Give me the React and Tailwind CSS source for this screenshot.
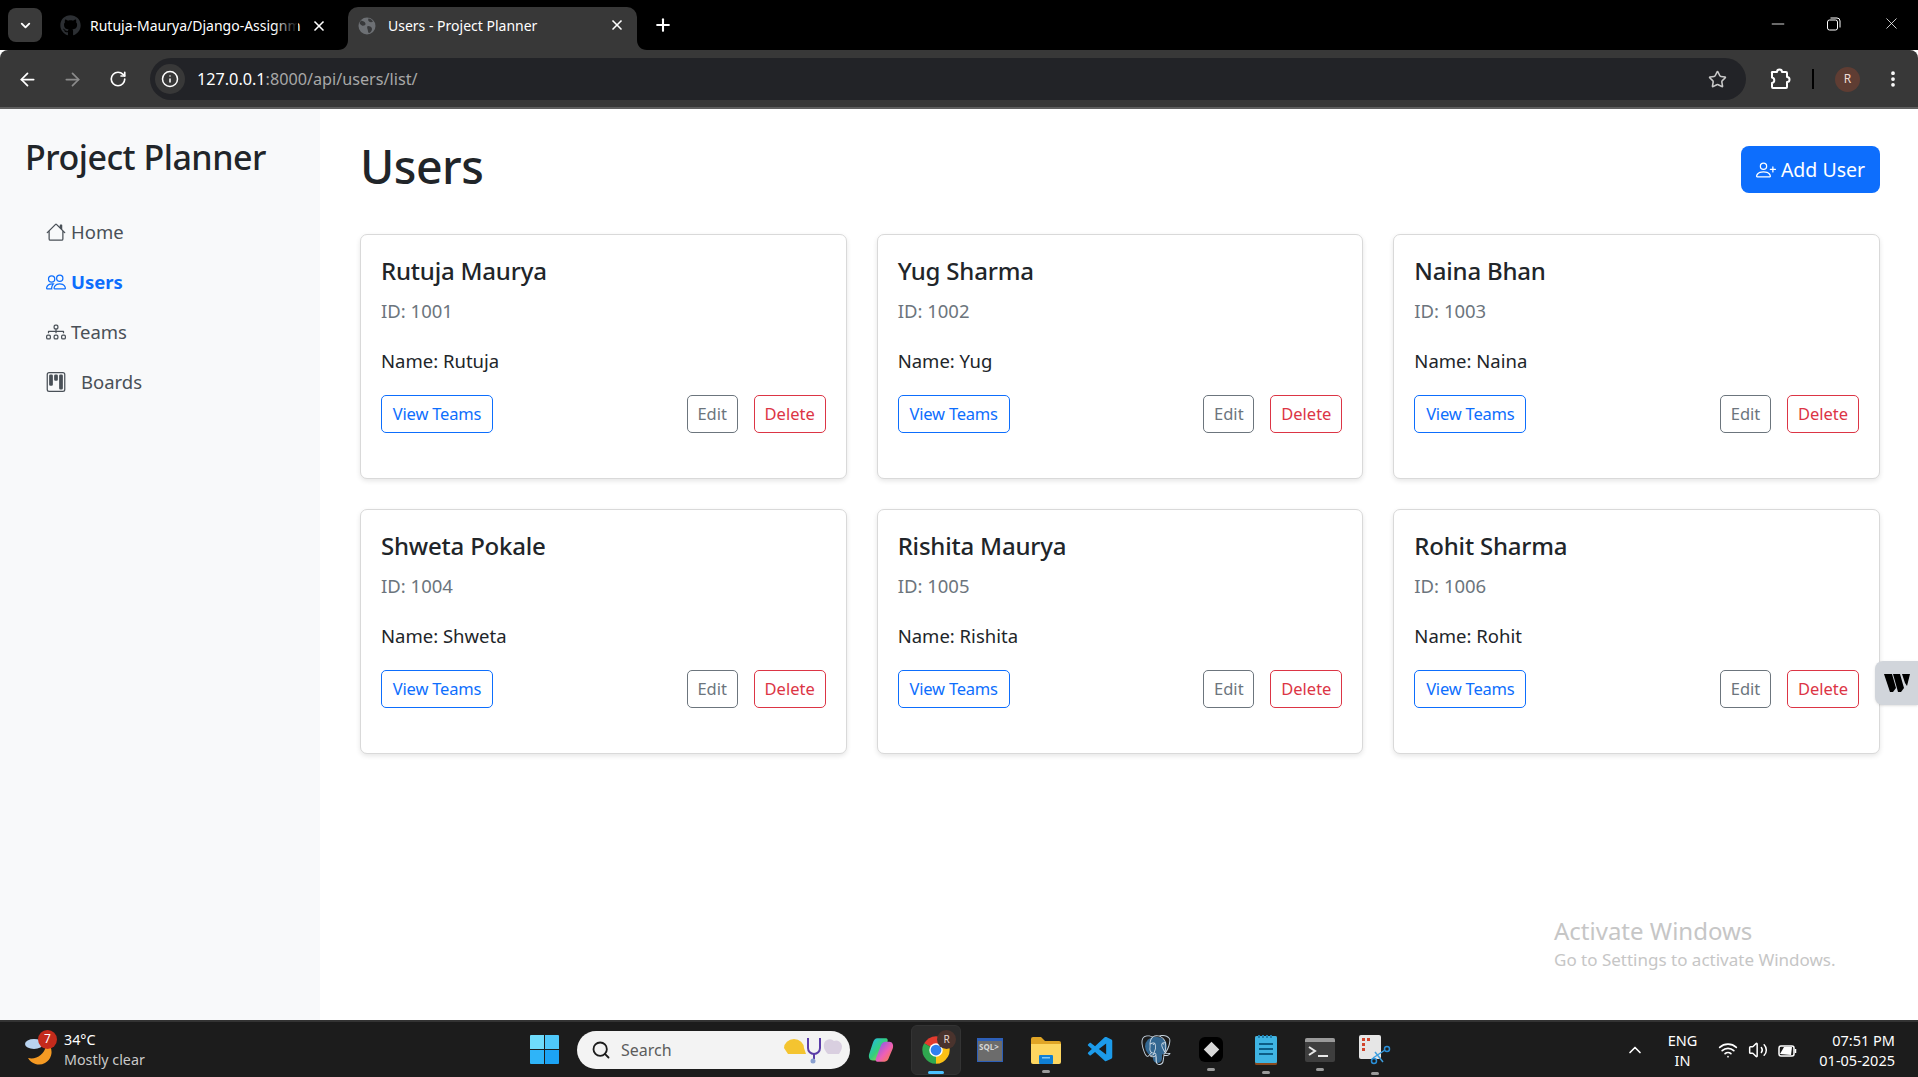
import { ArrowLeft, ArrowRight, RotateCw, Info, Star, EllipsisVertical, X, Plus, ChevronDown, ChevronUp, Minus, Search, Wifi, Volume2 } from 'lucide-react';
import { BsHouse, BsPeople, BsDiagram3, BsKanban, BsPersonPlus } from 'react-icons/bs';
import { FaGithub } from 'react-icons/fa';
import { SiPostgresql } from 'react-icons/si';
import { VscVscode } from 'react-icons/vsc';

const USERS = [
  { id: 1001, name: 'Rutuja Maurya', first: 'Rutuja' },
  { id: 1002, name: 'Yug Sharma', first: 'Yug' },
  { id: 1003, name: 'Naina Bhan', first: 'Naina' },
  { id: 1004, name: 'Shweta Pokale', first: 'Shweta' },
  { id: 1005, name: 'Rishita Maurya', first: 'Rishita' },
  { id: 1006, name: 'Rohit Sharma', first: 'Rohit' },
];

const ChromeLogo = () => (
  <svg width="30" height="30" viewBox="0 0 24 24">
    <path d="M12 12 L2.500 6.500 A11 11 0 0 1 21.500 6.500 Z" fill="#e33b2e" />
    <path d="M12 12 L21.500 6.500 A11 11 0 0 1 12 23 Z" fill="#fbc116" />
    <path d="M12 12 L12 23 A11 11 0 0 1 2.500 6.500 Z" fill="#2fa84f" />
    <circle cx="12" cy="12" r="5.400" fill="#fff" />
    <circle cx="12" cy="12" r="4.300" fill="#2f7fee" />
  </svg>
);

const Copilot = () => (
  <svg width="28" height="28" viewBox="0 0 24 24">
    <defs>
      <linearGradient id="cpa" x1="0" y1="0" x2="1" y2="1">
        <stop offset="0" stopColor="#1fb6f5" />
        <stop offset="0.5" stopColor="#35d07a" />
        <stop offset="1" stopColor="#f7c92e" />
      </linearGradient>
      <linearGradient id="cpb" x1="0" y1="0" x2="1" y2="1">
        <stop offset="0" stopColor="#6a5cf5" />
        <stop offset="0.55" stopColor="#ee5fb5" />
        <stop offset="1" stopColor="#f98a2c" />
      </linearGradient>
    </defs>
    <path d="M9 2h7c2 0 2 2 1.400 3.500L13 17c-1 2.500-3 4-5 4H5c-3 0-4-3-3-6l3-9c.8-2.500 2-4 4-4z" fill="url(#cpa)" />
    <path d="M15 22H9c-1.500 0-1.800-1.500-1.300-3L12 8c.8-2 2-3 4-3h3c3 0 4 3 3 6l-3 7c-.8 2.500-2 4-4 4z" fill="url(#cpb)" />
  </svg>
);

const Folder = () => (
  <svg width="30" height="28" viewBox="0 0 30 28">
    <path d="M0 3a2 2 0 0 1 2-2h8l4 4h14a2 2 0 0 1 2 2v4H0z" fill="#e0a526" />
    <path d="M0 8h30v18a2 2 0 0 1-2 2H2a2 2 0 0 1-2-2z" fill="#fdd660" />
    <rect x="8" y="19" width="14" height="9" rx="1" fill="#0f7fd4" />
    <rect x="11" y="21" width="8" height="1.500" fill="#7fc8f5" />
  </svg>
);

const SqlIcon = () => (
  <div className="w-[26px] h-6 bg-[#6c6c6c] border border-[#2d5fb8] border-t-[3px] flex items-start pl-[1px]">
    <span className="text-[8px] leading-[12px] font-bold text-[#d6d6d6]">SQL&gt;</span>
  </div>
);

const Notepad = () => (
  <svg width="22" height="30" viewBox="0 0 22 30">
    <rect x="0" y="1" width="22" height="29" rx="1.500" fill="#8a4a1f" />
    <rect x="0" y="1" width="22" height="27" rx="1.500" fill="#3fb4e3" />
    <rect x="4" y="8" width="14" height="2" fill="#0d5d86" />
    <rect x="4" y="13" width="14" height="2" fill="#0d5d86" />
    <rect x="4" y="18" width="14" height="2" fill="#0d5d86" />
    <path d="M3 0h2v3H3zM7 0h2v3H7zM11 0h2v3h-2zM15 0h2v3h-2z" fill="#1f7fae" />
  </svg>
);

const TerminalIcon = () => (
  <svg width="30" height="24" viewBox="0 0 30 24">
    <rect width="30" height="24" rx="2" fill="#3e3e3e" />
    <path d="M0 2a2 2 0 0 1 2-2h26a2 2 0 0 1 2 2v2H0z" fill="#9a9a9a" />
    <path d="M4 9l6 4-6 4" stroke="#e8e8e8" strokeWidth="2" fill="none" />
    <rect x="13" y="17" width="10" height="2" fill="#e8e8e8" />
  </svg>
);

const SnipIcon = () => (
  <svg width="32" height="32" viewBox="0 0 32 32">
    <rect x="0" y="1" width="22" height="24" rx="2" fill="#e6e6e6" />
    <rect x="3" y="4" width="3" height="3" fill="#d2452c" />
    <rect x="8" y="4" width="3" height="3" fill="#d2452c" />
    <rect x="3" y="9" width="3" height="3" fill="#d2452c" />
    <rect x="3" y="14" width="3" height="3" fill="#d2452c" />
    <path d="M14 24l12-8M16 18l8 10" stroke="#3d9fe0" strokeWidth="1.500" fill="none" />
    <circle cx="28" cy="15" r="2.500" stroke="#2a8fd8" strokeWidth="1.500" fill="none" />
    <circle cx="15" cy="27" r="2.500" stroke="#2a8fd8" strokeWidth="1.500" fill="none" />
  </svg>
);

const GlobeIcon = () => (
  <svg width="18" height="18" viewBox="0 0 18 18">
    <circle cx="9" cy="9" r="8.500" fill="#6d7074" />
    <path d="M3 3.500c2 .5 4 1 4.500 3S5 9 4 8.500 2 7 1.500 6zM10 9c2 0 4 1 4 3s-2 4-3 4-1-3-1.500-4S9 9 10 9zM10.500 1.500c2 0 3.500 1.500 4.500 3-1 1-3 1-4 0s-1-2-.5-3z" fill="#38393b" />
  </svg>
);

const ExtensionIcon = () => (
  <svg width="24" height="24" viewBox="0 0 24 24" fill="none" stroke="#fff" strokeWidth="2" strokeLinejoin="round" className="ml-[22px]">
    <path d="M4 5h5a2.500 2.500 0 0 1 5 0h4a1 1 0 0 1 1 1v4a2.500 2.500 0 0 1 0 5v5a1 1 0 0 1-1 1H5a1 1 0 0 1-1-1v-4a2.800 2.800 0 0 0 0-5.500V6a1 1 0 0 1 0-1z" />
  </svg>
);

const TabCorner = ({ flip }) => (
  <svg width="10" height="10" viewBox="0 0 10 10" className={flip ? 'absolute bottom-0 -right-[10px] -scale-x-100' : 'absolute bottom-0 -left-[10px]'}>
    <path d="M10 0v10H0c6 0 10-4 10-10z" fill="#383838" />
  </svg>
);

const TabStrip = () => (
  <div className="h-[50px] bg-black flex items-end shrink-0 relative">
    <div className="w-[34px] h-[34px] ml-[8px] mb-[8px] rounded-lg bg-[#3a3a3a] flex items-center justify-center text-white">
      <ChevronDown size={15} strokeWidth={3} />
    </div>
    <div className="w-[306px] h-[43px] flex items-center pl-[18px] pb-[6px] text-white text-[14px]">
      <FaGithub size={21} className="text-[#2c2f33] shrink-0" />
      <div className="ml-[9px] w-[216px] whitespace-nowrap relative">
        Rutuja-Maurya/Django-Assignm
        <div className="absolute inset-y-0 right-[8px] w-6 bg-gradient-to-r from-transparent to-black" />
      </div>
      <X size={16} strokeWidth={2.5} className="ml-[5px] shrink-0" />
    </div>
    <div className="w-[289px] h-[43px] bg-[#383838] rounded-t-[10px] relative flex items-center pl-[10px] pb-[6px] text-white text-[14px]">
      <TabCorner />
      <TabCorner flip />
      <GlobeIcon />
      <span className="ml-[12px] whitespace-nowrap">Users - Project Planner</span>
      <X size={16} strokeWidth={2.5} className="absolute right-[12px] top-[10px]" />
    </div>
    <Plus size={20} strokeWidth={2.5} className="text-white ml-[16px] mb-[15px]" />
    <div className="ml-auto flex items-center h-[50px] pb-[3px] text-white">
      <Minus size={20} strokeWidth={1} className="mr-[39px]" />
      <svg width="14" height="14" viewBox="0 0 14 14" className="mr-[41px]" fill="none" stroke="#fff">
        <rect x="0.500" y="3" width="10" height="10" rx="2" />
        <path d="M3.500 1h6.500a3 3 0 0 1 3 3v6.500" />
      </svg>
      <X size={19} strokeWidth={1} className="mr-[17px]" />
    </div>
  </div>
);

const Toolbar = () => (
  <div className="h-[59px] pt-[1px] bg-[#383838] rounded-t-lg border-b-2 border-[#5f5f5f] flex items-center shrink-0 text-white">
    <ArrowLeft size={21} strokeWidth={2} className="ml-[17px]" />
    <ArrowRight size={21} strokeWidth={2} className="ml-[24px] text-[#8b8b8b]" />
    <RotateCw size={18} strokeWidth={2.2} className="ml-[26px]" />
    <div className="w-[1596px] h-[42px] ml-[23px] rounded-full bg-[#222327] flex items-center pl-[5px]">
      <div className="w-[30px] h-[30px] rounded-full bg-[#383838] flex items-center justify-center">
        <Info size={18} strokeWidth={2} />
      </div>
      <span className="ml-[12px] text-[16.200px] text-white">127.0.0.1<span className="text-[#a8a8a8]">:8000/api/users/list/</span></span>
      <Star size={19} strokeWidth={2} className="ml-auto mr-[19px] text-[#c8c8c8]" />
    </div>
    <ExtensionIcon />
    <div className="w-[2px] h-5 bg-black ml-[20px]" />
    <div className="w-[25px] h-[25px] rounded-full bg-[#5f3d33] ml-[21px] flex items-center justify-center text-[12px] text-[#eedad4]">R</div>
    <EllipsisVertical size={20} strokeWidth={2.5} className="ml-[23px]" />
  </div>
);

const NAV = [
  { label: 'Home', icon: BsHouse, gap: 'ml-[5px]' },
  { label: 'Users', icon: BsPeople, active: true, gap: 'ml-[5px]' },
  { label: 'Teams', icon: BsDiagram3, gap: 'ml-[5px]' },
  { label: 'Boards', icon: BsKanban, gap: 'ml-[15px]' },
];

const Sidebar = () => (
  <aside className="w-[320px] bg-[#f8f9fa] shrink-0 pl-[25px] pt-[26px]">
    <h3 className="text-[34px] leading-[44px] font-medium text-[#212529] tracking-[-0.5px] whitespace-nowrap">Project Planner</h3>
    <nav className="mt-[28px] pl-[21px] flex flex-col">
      {NAV.map(({ label, icon: Icon, active, gap }) => (
        <a key={label} className={`h-[50px] flex items-center text-[18.500px] ${active ? 'text-[#0d6efd] font-bold' : 'text-[#495057]'}`}>
          <Icon size={20} />
          <span className={gap}>{label}</span>
        </a>
      ))}
    </nav>
  </aside>
);

const UserCard = ({ user }) => (
  <div className="bg-white border border-[#d9d9d9] rounded-[7px] shadow-[0_2px_5px_rgba(0,0,0,0.1)] pt-[21px] px-5 pb-[45px]">
    <h5 className="text-[24px] leading-[30px] font-medium text-[#212529] tracking-[-0.2px]">{user.name}</h5>
    <p className="text-[18.500px] leading-[30px] text-[#6c757d] mt-[10px]">ID: {user.id}</p>
    <p className="text-[18.500px] leading-[30px] text-[#212529] mt-5">Name: {user.first}</p>
    <div className="flex items-center mt-[19px]">
      <button className="h-[38px] w-[112px] border border-[#0d6efd] text-[#0d6efd] rounded-[5px] text-[16.500px] tracking-[-0.2px] whitespace-nowrap">View Teams</button>
      <button className="h-[38px] w-[51px] border border-[#6c757d] text-[#6c757d] rounded-[5px] text-[16.500px] ml-auto">Edit</button>
      <button className="h-[38px] w-[72px] border border-[#dc3545] text-[#dc3545] rounded-[5px] text-[16.500px] ml-[16px]">Delete</button>
    </div>
  </div>
);

const Main = () => (
  <main className="flex-1 bg-white pl-10 pr-[38px] pt-[27px]">
    <div className="flex items-start justify-between mb-[38px]">
      <h1 className="text-[46.500px] leading-[60px] font-medium text-[#212529] tracking-[-0.5px]">Users</h1>
      <button className="mt-[10px] w-[139px] h-[47px] bg-[#0d6efd] text-white rounded-lg text-[19.500px] flex items-center justify-center gap-[5px]">
        <BsPersonPlus size={20} />
        Add User
      </button>
    </div>
    <div className="grid grid-cols-3 gap-x-[30px] gap-y-[30px]">
      {USERS.map((u) => <UserCard key={u.id} user={u} />)}
    </div>
  </main>
);

const Dot = () => <span className="absolute -bottom-[9px] left-1/2 -translate-x-1/2 w-[8px] h-[3px] rounded-full bg-[#9a9a9a]" />;

const Taskbar = () => (
  <div className="h-[57px] bg-[#1c1c1c] border-t-2 border-[#333] shrink-0 flex items-center relative text-white">
    {/* weather */}
    <div className="w-[530px] flex items-center pl-[24px] h-full shrink-0">
      <div className="relative w-[32px] h-[36px]">
        <svg width="32" height="36" viewBox="0 0 32 36">
          <path d="M26 14a11 11 0 0 1-22 12c8 2 16-3 18-12z" fill="#f59a23" />
          <ellipse cx="10" cy="12" rx="9" ry="5" fill="#b9d3f0" />
        </svg>
        <span className="absolute -top-[2px] left-[14px] w-[19px] h-[19px] rounded-full bg-[#c42b1c] text-[12px] flex items-center justify-center">7</span>
      </div>
      <div className="ml-[8px] text-[14.300px] leading-[20px]">
        <div>34°C</div>
        <div className="text-[#c9c9c9]">Mostly clear</div>
      </div>
    </div>

    {/* pinned apps */}
    <svg width="29" height="29" viewBox="0 0 29 29" className="shrink-0">
      <path d="M0 1a1 1 0 0 1 1-1h13v14H0z" fill="#6fdcfb" />
      <path d="M15 0h13a1 1 0 0 1 1 1v13H15z" fill="#4fc8fa" />
      <path d="M0 15h14v14H1a1 1 0 0 1-1-1z" fill="#2fb4f8" />
      <path d="M15 15h14v13a1 1 0 0 1-1 1H15z" fill="#1ca3f5" />
    </svg>
    <div className="ml-[18px] w-[273px] h-[38px] rounded-full bg-[#f3f3f3] flex items-center pl-[14px] text-[#5c5c5c] text-[16px] shrink-0">
      <Search size={20} strokeWidth={2.2} className="text-[#1c1c1c]" />
      <span className="ml-[10px]">Search</span>
      <svg width="62" height="30" viewBox="0 0 62 30" className="ml-auto mr-[6px]">
        <path d="M2 13a10 9 0 0 1 20 0l2 6-18 0z" fill="#f4c430" />
        <path d="M26 3v10a6 6 0 0 0 12 0V3" stroke="#5b3da8" strokeWidth="2" fill="none" />
        <path d="M32 19v5" stroke="#5b3da8" strokeWidth="2" />
        <circle cx="31" cy="26" r="2.500" fill="#8aa0d0" />
        <path d="M42 9a6 6 0 0 1 10-3 6 6 0 0 1 8 5c0 4-2 6-3 8H46c-2-2-5-6-4-10z" fill="#d9cfe0" />
      </svg>
    </div>
    <div className="ml-[17px] w-[28px] h-[28px] shrink-0"><Copilot /></div>
    <div className="ml-[16px] w-[50px] h-[50px] rounded-md bg-[#2b2b2b] border border-[#333] flex items-center justify-center relative shrink-0">
      <ChromeLogo />
      <span className="absolute top-[4px] right-[4px] w-[19px] h-[19px] rounded-full bg-[#4a332d] text-[10px] flex items-center justify-center text-[#e8d8d2]">R</span>
      <span className="absolute bottom-0 left-[16px] w-[16px] h-[3px] rounded-full bg-[#4cc2ff]" />
    </div>
    <div className="ml-[16px] shrink-0"><SqlIcon /></div>
    <div className="ml-[28px] shrink-0 relative"><Folder /><Dot /></div>
    <VscVscode size={30} className="ml-[25px] text-[#1c9bea] shrink-0" />
    <div className="ml-[25px] w-[30px] h-[30px] shrink-0 relative flex items-center justify-center">
      <div className="absolute top-[2px] left-[4px] w-[22px] h-[19px] rounded-full bg-[#336791]" />
      <div className="absolute top-[12px] left-[12px] w-[9px] h-[16px] rounded-full bg-[#336791]" />
      <SiPostgresql size={30} className="text-[#c8d6e2] relative" />
    </div>
    <div className="ml-[28px] w-[24px] h-[25px] rounded-md bg-black flex items-center justify-center relative shrink-0">
      <div className="w-[11px] h-[11px] bg-[#d8d8d8] rotate-45" />
      <Dot />
    </div>
    <div className="ml-[32px] shrink-0 relative"><Notepad /><Dot /></div>
    <div className="ml-[28px] shrink-0 relative"><TerminalIcon /><Dot /></div>
    <div className="ml-[24px] shrink-0 relative"><SnipIcon /><Dot /></div>

    {/* tray */}
    <div className="ml-auto flex items-center pr-[23px] shrink-0">
      <ChevronUp size={20} strokeWidth={2} />
      <div className="ml-[23px] text-[14.500px] leading-[20px] text-center">ENG<br />IN</div>
      <Wifi size={20} strokeWidth={2} className="ml-[21px]" />
      <Volume2 size={20} strokeWidth={1.8} className="ml-[10px]" />
      <svg width="20" height="16" viewBox="0 0 20 16" className="ml-[10px]" fill="none" stroke="#fff" strokeWidth="1.500">
        <rect x="1" y="4" width="15" height="10" rx="2" />
        <path d="M2 12l4-7h8l-1 8z" fill="#fff" stroke="none" />
        <path d="M17.500 7v4" />
      </svg>
      <div className="ml-[21px] text-[14.500px] leading-[20px] text-right whitespace-nowrap">07:51 PM<br />01-05-2025</div>
    </div>
  </div>
);

export default function App() {
  return (
    <div className="h-screen flex flex-col overflow-hidden relative font-['Noto_Sans',sans-serif]">
      <TabStrip />
      <Toolbar />
      <div className="flex-1 flex min-h-0">
        <Sidebar />
        <Main />
      </div>
      <Taskbar />

      {/* extension tab on the right edge */}
      <div className="absolute top-[661px] right-0 w-[43px] h-[44px] bg-[#d1d5db] rounded-l-lg flex items-center justify-center shadow-sm">
        <svg width="26" height="18" viewBox="0 0 26 18">
          <path d="M0 0h8l4 14-3 4H6zM9 0h7l4 14-3 4h-3zM18 0h8l-3 12-2-3z" fill="#000" />
        </svg>
      </div>

      {/* windows watermark */}
      <div className="absolute left-[1554px] top-[915px] text-[#c6c6c6] pointer-events-none whitespace-nowrap">
        <div className="text-[24px] leading-[32px]">Activate Windows</div>
        <div className="text-[17px] leading-[26px]">Go to Settings to activate Windows.</div>
      </div>
    </div>
  );
}
